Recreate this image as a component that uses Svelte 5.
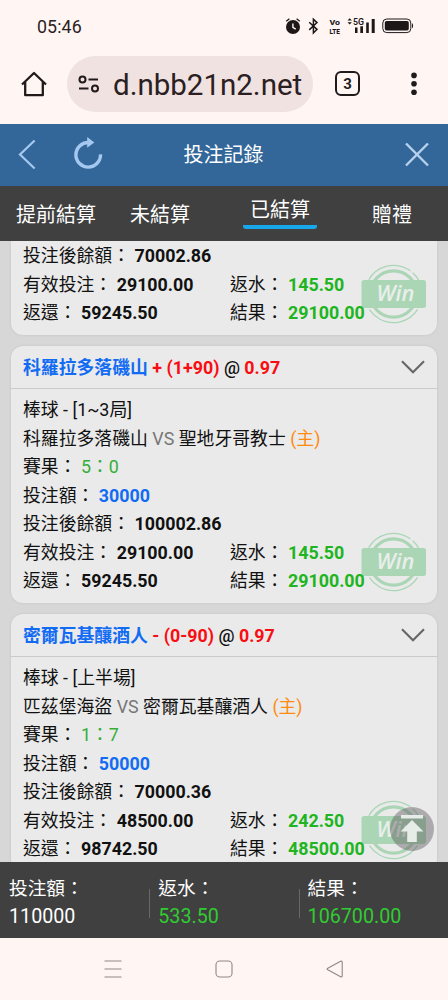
<script>
  const tabs = [
    { label: '提前結算', width: 112 },
    { label: '未結算', width: 96 },
    { label: '已結算', width: 144, active: true },
    { label: '贈禮', width: 80 },
  ];

  const bets = [
    { balance: '70002.86', valid: '29100.00', rebate: '145.50', returned: '59245.50', result: '29100.00' },
    {
      pick: '科羅拉多落磯山', line: '+ (1+90)', odds: '0.97',
      game: '棒球 - [1~3局]', away: '科羅拉多落磯山', home: '聖地牙哥教士', score: '5：0', stake: '30000',
      balance: '100002.86', valid: '29100.00', rebate: '145.50', returned: '59245.50', result: '29100.00',
    },
    {
      pick: '密爾瓦基釀酒人', line: '- (0-90)', odds: '0.97',
      game: '棒球 - [上半場]', away: '匹茲堡海盜', home: '密爾瓦基釀酒人', score: '1：7', stake: '50000',
      balance: '70000.36', valid: '48500.00', rebate: '242.50', returned: '98742.50', result: '48500.00',
    },
  ];

  const totals = [
    { label: '投注額：', value: '110000' },
    { label: '返水：', value: '533.50', green: true },
    { label: '結果：', value: '106700.00', green: true },
  ];
</script>

<div class="phone">
  <div class="status">
    <span class="clock">05:46</span>
    <svg class="indicators" width="132" height="20" viewBox="0 0 132 20" fill="#1d1718">
      <circle cx="10" cy="11" r="7" />
      <path d="M3.2 5.2 6.4 2.8M16.8 5.2 13.6 2.8" stroke="#1d1718" stroke-width="1.3" />
      <path d="M9.9 7.4v4l2.8 1.8" fill="none" stroke="#fff6f4" stroke-width="1.4" />
      <path d="M26.2 6.3 34 13.4 30.4 17V3.2L34 6.6 26.2 13.9" fill="none" stroke="#1d1718" stroke-width="1.5" />
      <g font-family="Roboto, sans-serif" font-weight="800">
        <text x="46.5" y="8.6" font-size="7.8" textLength="10.5" lengthAdjust="spacingAndGlyphs">Vo</text>
        <text x="46.5" y="17.8" font-size="7.8" textLength="10.5" lengthAdjust="spacingAndGlyphs">LTE</text>
        <text x="70" y="9" font-size="9.4" font-weight="600" textLength="11" lengthAdjust="spacingAndGlyphs">5G</text>
      </g>
      <path d="M64.5 4.6 66.7 2.2 68.9 4.6zM64.5 6.2h4.4l-2.2 2.4z" />
      <path d="M72 11.5h2.5V17H72zM77.3 10.3h2.7V17h-2.7zM83.2 6.5h2.6V17h-2.6zM88.7 3h3v14h-3z" />
      <rect x="99.8" y="3" width="28" height="13.6" rx="4" fill="none" stroke="#1d1718" stroke-width="1" />
      <rect x="101.8" y="5" width="24" height="9.6" rx="1.8" />
      <path d="M129 7.3c1.4.5 1.4 4.5 0 5z" />
    </svg>
  </div>

  <div class="browser">
    <svg class="home" width="28" height="28" viewBox="0 0 28 28" fill="none" stroke="#211a1b" stroke-width="2.3">
      <path d="M2 14.5 14 3l12 11.5M5.2 12v13.2h17.6V12" stroke-linejoin="round" />
    </svg>
    <div class="address">
      <svg width="22" height="18" viewBox="0 0 22 18" fill="none" stroke="#211a1b" stroke-width="2">
        <circle cx="4.5" cy="4.5" r="3" /><path d="M10.5 4.5H20M1 13.5h9.5" /><circle cx="17" cy="13.5" r="3" />
      </svg>
      <span>d.nbb21n2.net</span>
    </div>
    <div class="count">3</div>
    <svg class="more" width="8" height="24" viewBox="0 0 8 24" fill="#211a1b">
      <circle cx="4" cy="3.4" r="2.8" /><circle cx="4" cy="11.8" r="2.8" /><circle cx="4" cy="20.2" r="2.8" />
    </svg>
  </div>

  <header>
    <div class="left">
      <svg width="18" height="32" viewBox="0 0 18 32" fill="none" stroke="#a5c8f0" stroke-width="2.2">
        <path d="M16.6 1.5 2 15.5l14.6 14" />
      </svg>
      <svg class="refresh" width="32" height="34" viewBox="0 0 32 34">
        <path d="M16.5 6.5A12.3 12.3 0 1 0 28.5 18.4" fill="none" stroke="#a5c8f0" stroke-width="3.4" />
        <path d="M15.2 1 22.3 6.4 15.2 11.8z" fill="#a5c8f0" />
      </svg>
    </div>
    <h1>投注記錄</h1>
    <svg class="close" width="24" height="24" viewBox="0 0 24 24" stroke="#b7d0ec" stroke-width="2.4">
      <path d="M1 .5 23 22.5M23 .5 1 22.5" />
    </svg>
  </header>

  <nav class="tabs">
    {#each tabs as tab}
      <div class="tab" class:active={tab.active} style="width: {tab.width}px"><span>{tab.label}</span></div>
    {/each}
  </nav>

  <main>
    {#each bets as bet}
      <article class:partial={!bet.pick}>
        {#if bet.pick}
          <div class="head">
            <div><b class="blue">{bet.pick}</b> <b class="red">{bet.line}</b> <span class="at">@</span> <b class="red">{bet.odds}</b></div>
            <svg width="24" height="14" viewBox="0 0 24 14" fill="none" stroke="#666" stroke-width="2.1">
              <path d="M1 1.2 12 12.2 23 1.2" />
            </svg>
          </div>
        {/if}
        <div class="body">
          <svg class="stamp" width="66" height="60" viewBox="0 0 66 60">
            <g fill="none" stroke="#abd6b6">
              <circle cx="32.5" cy="30" r="23.2" stroke-width="3.2" />
              <circle cx="32.5" cy="30" r="28.6" stroke-width="1.3" stroke-dasharray="48 3 38 2 57 3 26 2.7" transform="rotate(-150 32.5 30)" />
            </g>
            <rect x="0.5" y="16" width="64.5" height="28" rx="2.5" fill="#abd6b6" />
            <text x="34.5" y="37.4" text-anchor="middle" fill="#e9eeea" font-family="Open Sans, sans-serif" font-weight="600" font-style="italic" font-size="21.5" textLength="38" lengthAdjust="spacingAndGlyphs">Win</text>
          </svg>
          {#if bet.pick}
            <div class="row">{bet.game}</div>
            <div class="row">{bet.away} <span class="vs">VS</span> {bet.home} <span class="host">(主)</span></div>
            <div class="row">賽果： <span class="score">{bet.score}</span></div>
            <div class="row">投注額： <b class="blue">{bet.stake}</b></div>
          {/if}
          <div class="row">投注後餘額： <b>{bet.balance}</b></div>
          <div class="row pair"><span>有效投注： <b>{bet.valid}</b></span><span>返水： <b class="green">{bet.rebate}</b></span></div>
          <div class="row pair"><span>返還： <b>{bet.returned}</b></span><span>結果： <b class="green">{bet.result}</b></span></div>
        </div>
      </article>
    {/each}
    <div class="top">
      <svg width="24" height="28" viewBox="0 0 24 28" fill="#e6ece8">
        <path d="M1 0h22v3.4H1zM12 5 23.5 16.5H16.8V27H7.2V16.5H.5z" />
      </svg>
    </div>
  </main>

  <footer>
    {#each totals as total}
      <div class="total"><span>{total.label}</span><span class="value" class:lime={total.green}>{total.value}</span></div>
    {/each}
  </footer>

  <div class="system">
    <svg width="20" height="20" viewBox="0 0 20 20"><path d="M1.5 2h17M1.5 10h17M1.5 18h17" /></svg>
    <svg width="20" height="20" viewBox="0 0 20 20"><rect x="2" y="2" width="16" height="16" rx="3.8" /></svg>
    <svg width="20" height="20" viewBox="0 0 20 20"><path d="M15.6 2.3 2.8 9.2q-1.4.8 0 1.6l12.8 6.9q1.6.7 1.6-.9V3.2q0-1.6-1.6-.9z" /></svg>
  </div>
</div>

<style>
  :global(body) { margin: 0; background: #fff6f4; }
  .phone {
    width: 448px; height: 1000px; display: flex; flex-direction: column; overflow: hidden;
    background: #fff6f4; color: #111;
    font-family: Roboto, "Noto Sans CJK TC", sans-serif;
  }
  svg { display: block; flex: none; }
  .status { height: 52px; flex: none; display: flex; justify-content: space-between; align-items: center; padding: 0 33px 0 37px; box-sizing: border-box; }
  .clock { font-size: 17.8px; letter-spacing: .1px; color: #2a2223; }
  .indicators { margin-top: -1px; }
  .browser { height: 72px; flex: none; display: flex; align-items: center; box-sizing: border-box; padding: 0 30px 9px 20px; }
  .address {
    width: 246px; height: 56px; box-sizing: border-box; margin-left: 19px; padding-left: 11px;
    border-radius: 28px; background: #f0e2e1; display: flex; align-items: center; gap: 13px; color: #2b2021;
  }
  .address span { font-size: 29.5px; white-space: nowrap; padding-top: 2px; }
  .count {
    width: 25px; height: 25px; box-sizing: border-box; margin-left: 22px; border: 2.4px solid #211a1b; border-radius: 6px;
    display: flex; align-items: center; justify-content: center; font-size: 15px; font-weight: 700; color: #211a1b;
  }
  .more { margin-left: auto; }
  header { height: 62px; flex: none; background: #336799; display: grid; grid-template-columns: 1fr auto 1fr; align-items: center; padding: 0 19px 0 18px; }
  .left { display: flex; align-items: center; gap: 36px; }
  .refresh { margin-top: -4px; }
  h1 { margin: 0; font-size: 20px; line-height: 30px; font-weight: 400; color: #fff; }
  .close { justify-self: end; }
  .tabs { height: 55px; flex: none; background: #404040; display: flex; color: #fff; font-size: 20px; }
  .tab { display: flex; justify-content: center; align-items: center; }
  .tab span { line-height: 30px; padding-top: 2px; }
  .tab.active span { border-bottom: 4px solid #18a7ea; padding: 0 7px; line-height: 29px; margin-bottom: 3px; border-radius: 0 0 3px 3px; }
  main {
    height: 621px; flex: none; overflow: hidden; position: relative; box-sizing: border-box; padding: 0 11px;
    background: #d7d7d7; display: flex; flex-direction: column; gap: 11px; font-size: 17.85px;
  }
  article { background: #eaeaea; border-radius: 12px; flex: none; height: 257px; box-shadow: 0 0 3px rgba(0, 0, 0, .09); }
  article.partial { height: 94px; border-radius: 0 0 12px 12px; }
  .head { height: 42px; border-bottom: 1px solid #cacaca; display: flex; justify-content: space-between; align-items: center; padding: 0 12px; white-space: nowrap; }
  .head div { margin-top: -3px; }
  .at { font-weight: 500; }
  .body { position: relative; box-sizing: border-box; padding: 7.4px 12px 0; height: 214px; }
  .partial .body { padding-top: 1.3px; height: 94px; }
  .row { height: 28.45px; line-height: 28.45px; white-space: nowrap; position: relative; }
  .pair { display: grid; grid-template-columns: 207px 1fr; }
  b { font-weight: 700; }
  .blue { color: #126cf3; }
  .red { color: #f80d12; }
  .green { color: #20b520; }
  .score { color: #35ae39; }
  .host { color: #ff8c10; }
  .vs { color: #777; }
  .stamp { position: absolute; right: 10px; bottom: 11px; }
  .top {
    position: absolute; left: 390px; top: 566px; width: 44px; height: 44px; border-radius: 50%;
    background: rgba(90, 85, 90, .43); display: flex; align-items: center; justify-content: center;
  }
  footer { height: 76px; flex: none; background: #404040; display: grid; grid-template-columns: repeat(3, 149.3px); color: #fff; }
  .total { display: flex; flex-direction: column; padding: 14px 0 0 9px; font-size: 18.7px; line-height: 27px; position: relative; }
  .total + .total::before { content: ""; position: absolute; left: 0; top: 27px; height: 29px; width: 1px; background: #686868; }
  .value { font-size: 19.7px; }
  .lime { color: #31cb32; }
  .system { flex: 1; display: flex; justify-content: center; align-items: center; gap: 91px; }
  .system svg { fill: none; stroke: #8f8786; stroke-width: 1.1; }
</style>
